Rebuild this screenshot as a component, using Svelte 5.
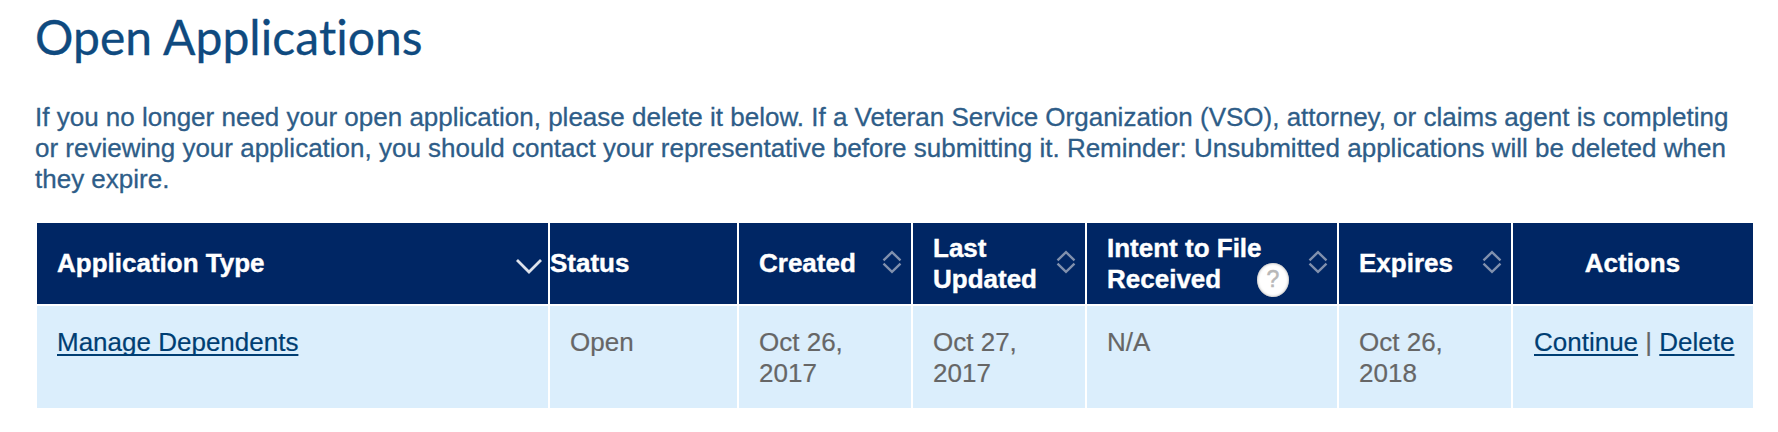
<script>
  const columns = [
    { lines: ['Application Type'], icon: 'down' },
    { lines: ['Status'], flush: true },
    { lines: ['Created'], icon: 'sort' },
    { lines: ['Last', 'Updated'], icon: 'sort' },
    { lines: ['Intent to File', 'Received'], icon: 'sort', help: true },
    { lines: ['Expires'], icon: 'sort' },
    { lines: ['Actions'], center: true }
  ];
  const dates = [['Oct 26,', '2017'], ['Oct 27,', '2017'], ['N/A'], ['Oct 26,', '2018']];
</script>

<main>
  <h1>Open Applications</h1>
  <p>
    If you no longer need your open application, please delete it below. If a Veteran Service Organization (VSO), attorney, or claims agent is completing<br />
    or reviewing your application, you should contact your representative before submitting it. Reminder: Unsubmitted applications will be deleted when<br />
    they expire.
  </p>

  <div class="table" role="table">
    {#each columns as col}
      <div class="head" class:flush={col.flush} class:center={col.center} role="columnheader">
        <span class="label">
          {#each col.lines as line}<span class="line">{line}</span>{/each}
          {#if col.help}<span class="help">?</span>{/if}
        </span>
        {#if col.icon === 'down'}
          <svg class="down" width="28" height="18" viewBox="0 0 28 18"><path d="M2 3L14 15L26 3" /></svg>
        {:else if col.icon === 'sort'}
          <svg class="sort" width="20" height="24" viewBox="0 0 20 24"><path d="M1.5 10.3L10 2.2L18.5 10.3M1.5 13.7L10 21.8L18.5 13.7" /></svg>
        {/if}
      </div>
    {/each}

    <div class="cell" role="cell"><a href="#manage">Manage Dependents</a></div>
    <div class="cell" role="cell">Open</div>
    {#each dates as lines}
      <div class="cell" role="cell">
        {#each lines as line}<span class="line">{line}</span>{/each}
      </div>
    {/each}
    <div class="cell actions" role="cell"><a href="#continue">Continue</a> | <a href="#delete">Delete</a></div>
  </div>
</main>

<style>
  :global(body) {
    margin: 0;
    background: #fff;
  }
  main {
    box-sizing: border-box;
    width: 1778px;
    height: 432px;
    padding: 7px 25px 0 35px;
    overflow: hidden;
    font: 26px/31px 'Liberation Sans', Arial, sans-serif;
  }
  h1 {
    margin: 0;
    font: 400 48px/60px Lato, sans-serif;
    font-variant-ligatures: none;
    letter-spacing: 0.06px;
    color: #0f4a7f;
    -webkit-text-stroke: 0.3px #0f4a7f;
  }
  p {
    margin: 35px 0 0;
    color: #2e5d88;
    white-space: nowrap;
    -webkit-text-stroke: 0.3px #2e5d88;
  }
  .table {
    display: grid;
    grid-template-columns: 511px 187px 172px 172px 250px 172px 240px;
    grid-template-rows: 81px 102px;
    gap: 2px;
    margin: 28px 0 0 2px;
  }
  .head {
    box-sizing: border-box;
    display: flex;
    align-items: center;
    justify-content: space-between;
    padding: 0 9px 0 20px;
    background: #002664;
    color: #fff;
    font-weight: 700;
    white-space: nowrap;
    -webkit-text-stroke: 0.4px #fff;
  }
  .flush {
    padding-left: 0;
  }
  .center {
    justify-content: center;
    padding: 0 1px 0 0;
  }
  .label {
    position: relative;
  }
  .line {
    display: block;
  }
  .help {
    position: absolute;
    left: 150px;
    top: 30px;
    width: 32px;
    height: 34px;
    border-radius: 50%;
    background: #fff;
    box-shadow: inset 0 0 3px #999;
    color: #b8b8b8;
    font-size: 23px;
    font-weight: 400;
    line-height: 32px;
    text-align: center;
    -webkit-text-stroke: 0.5px #b8b8b8;
  }
  svg {
    flex: none;
    fill: none;
  }
  .down {
    margin: 4px -4px 0 0;
    stroke: #dde2eb;
    stroke-width: 2.8;
  }
  .sort {
    margin-top: -3px;
    stroke: #8090ad;
    stroke-width: 2.4;
  }
  .cell {
    box-sizing: border-box;
    padding: 21px 0 0 20px;
    background: #dbeefc;
    color: #666;
    white-space: nowrap;
    -webkit-text-stroke: 0.2px currentColor;
  }
  .cell .line:nth-child(2) {
    margin-top: -0.5px;
  }
  .actions {
    padding-left: 21px;
  }
  a {
    color: #003e73;
    text-decoration: underline 2px;
    text-underline-offset: 3px;
    text-decoration-skip-ink: none;
  }
</style>
